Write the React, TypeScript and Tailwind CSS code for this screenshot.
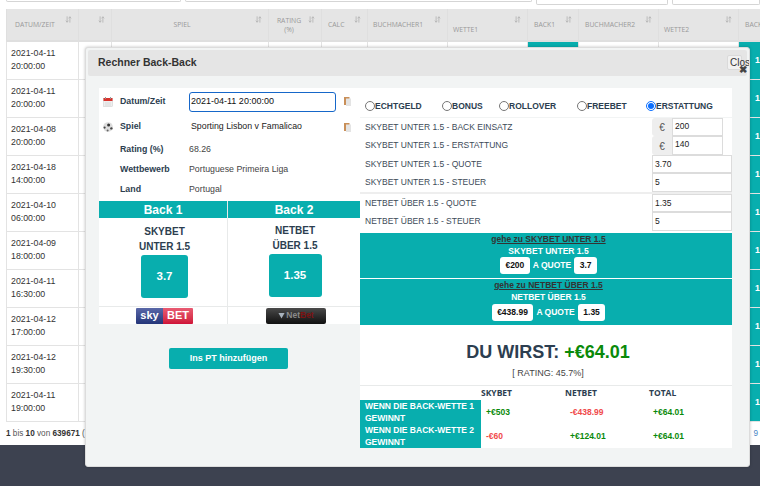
import React from 'react';

const TEAL = 'bg-[#08aeae]';

const HEADERS = [
    { label: 'DATUM/ZEIT', w: 'w-[72px]', cls: 'text-left pl-2' },
    { label: '', w: 'w-[33px]', cls: '' },
    { label: 'SPIEL', w: 'w-[157px]', cls: 'text-center pr-[16px]' },
    { label: 'RATING (%)', w: 'w-[53px]', cls: 'text-center pr-[12px]' },
    { label: 'CALC', w: 'w-[46px]', cls: 'text-left pl-[6px]' },
    { label: 'BUCHMACHER1', w: 'w-[80px]', cls: 'text-left pl-[5px]' },
    { label: 'WETTE1', w: 'w-[80px]', cls: 'text-left pl-[5px] pt-[9px]' },
    { label: 'BACK1', w: 'w-[51px]', cls: 'text-left pl-[6px]' },
    { label: 'BUCHMACHER2', w: 'w-[80px]', cls: 'text-left pl-[6px]' },
    { label: 'WETTE2', w: 'w-[80px]', cls: 'text-left pl-[5px] pt-[9px]' },
    { label: 'BACK2', w: 'w-[60px]', cls: 'text-left pl-[6px]' },
];

const DATES = [
    ['2021-04-11', '20:00:00'],
    ['2021-04-11', '20:00:00'],
    ['2021-04-08', '20:00:00'],
    ['2021-04-18', '14:00:00'],
    ['2021-04-10', '06:00:00'],
    ['2021-04-09', '18:00:00'],
    ['2021-04-11', '16:30:00'],
    ['2021-04-12', '17:00:00'],
    ['2021-04-12', '19:30:00'],
    ['2021-04-11', '19:00:00'],
];

const RADIOS = [
    { label: 'ECHTGELD', w: 'w-[77px]' },
    { label: 'BONUS', w: 'w-[57px]' },
    { label: 'ROLLOVER', w: 'w-[78px]' },
    { label: 'FREEBET', w: 'w-[69px]' },
    { label: 'ERSTATTUNG', w: 'w-[80px]', checked: true },
];

function SortIcon({ className }: { className?: string }) {
    return (
        <svg viewBox="0 0 10 9" className={`h-[7px] w-[7px] text-[#b5b5b5] ${className ?? ''}`} fill="none" stroke="currentColor" strokeWidth="1.2" preserveAspectRatio="none">
            <path d="M3 0.5V8M1.2 6L3 8L4.8 6" />
            <path d="M7 8.5V1M5.2 3L7 1L8.8 3" />
        </svg>
    );
}

function BackgroundTable() {
    return (
        <table className="ml-[6px] table-fixed border-collapse w-[792px] font-['Liberation_Sans',sans-serif]">
            <thead>
                <tr className="h-[32px] bg-[#e5e5e5]">
                    {HEADERS.map((h, i) => (
                        <th key={i} className={`${h.w} ${h.cls} relative border-x border-[#dfdfdf] border-b-2 text-[6.8px] font-normal leading-[9px] text-[#999] font-['Open_Sans',sans-serif]`}>
                            {h.label === 'RATING (%)' ? <>RATING<br />(%)</> : h.label}
                            <SortIcon className="absolute right-[6px] top-[7px]" />
                        </th>
                    ))}
                </tr>
            </thead>
            <tbody>
                {DATES.map((d, i) => (
                    <tr key={i} className="h-[38px]">
                        {HEADERS.map((h, j) => (
                            <td
                                key={j}
                                className={`border border-[#e3e3e3] text-[8.8px] leading-[13px] text-[#333] pl-[4px] ${j === 7 || j === 10 ? `${TEAL} font-bold !text-white` : ''}`}
                            >
                                {j === 0 ? <>{d[0]}<br />{d[1]}</> : j === 7 || j === 10 ? <span className="block pl-[12px]">1</span> : null}
                            </td>
                        ))}
                    </tr>
                ))}
            </tbody>
        </table>
    );
}

function CalendarIcon() {
    return (
        <svg viewBox="0 0 10 10" className="h-[10px] w-[10px] shrink-0">
            <rect x="0.5" y="1.5" width="9" height="8" fill="#eee" stroke="#c9c9c9" strokeWidth="0.5" />
            <rect x="0.5" y="1" width="9" height="3" fill="#d8322c" />
            <rect x="2" y="0" width="1" height="2" fill="#999" />
            <rect x="7" y="0" width="1" height="2" fill="#999" />
            <path d="M2 6h6M2 8h6" stroke="#cfcfcf" strokeWidth="0.6" />
        </svg>
    );
}

function BallIcon() {
    return (
        <svg viewBox="0 0 10 10" className="h-[10px] w-[10px] shrink-0">
            <circle cx="5" cy="5" r="4.8" fill="#ddd" />
            <circle cx="5.6" cy="3" r="1.5" fill="#333" />
            <circle cx="1.6" cy="5.6" r="1.1" fill="#444" />
            <circle cx="8.4" cy="6.4" r="1.2" fill="#444" />
            <circle cx="4.6" cy="8.6" r="1" fill="#666" />
        </svg>
    );
}

function CopyIcon() {
    return (
        <svg viewBox="0 0 7 9" className="h-[9px] w-[7px] shrink-0">
            <rect x="0" y="0" width="5.5" height="8" fill="#c98f58" />
            <rect x="2" y="1.5" width="5" height="7.5" fill="#e4e4e4" />
        </svg>
    );
}

function InfoRow({ icon, label, children, copy, h }: { icon?: React.ReactNode; label: string; children: React.ReactNode; copy?: boolean; h: string }) {
    return (
        <div className={`flex items-center ${h}`}>
            <div className="flex w-[21px] justify-start pl-[4px]">{icon}</div>
            <div className="w-[69px] text-[8.8px] font-bold text-[#2c3e50]">{label}</div>
            <div className="flex-1 text-[8.8px]">{children}</div>
            {copy && <div className="mr-[9px]"><CopyIcon /></div>}
        </div>
    );
}

function BackColumn({ title, bookie, market, odds, up, logo, className }: { title: string; bookie: string; market: string; odds: string; up?: boolean; logo: React.ReactNode; className: string }) {
    return (
        <div className={`flex flex-col ${className}`}>
            <div className={`${TEAL} flex h-[17px] items-center justify-center text-[12px] font-bold text-white`}>{title}</div>
            <div className={`flex h-[89px] flex-col items-center border-b border-[#e8eaea] ${up ? 'pt-[5px] pl-[2px]' : 'pt-[6px] pl-[3px]'}`}>
                <div className="text-[10px] font-bold leading-[15px] text-[#2c3e50]">{bookie}</div>
                <div className="text-[10px] font-bold leading-[15px] text-[#2c3e50]">{market}</div>
                <div className={`${TEAL} mt-[1px] flex h-[43px] items-center justify-center rounded-[3px] text-[11.5px] font-bold text-white ${up ? 'w-[53px]' : 'w-[47px]'}`}>{odds}</div>
            </div>
            <div className={`flex h-[17px] items-center justify-center ${up ? 'pl-[4px]' : 'pl-[3px]'}`}>{logo}</div>
        </div>
    );
}

function FieldRow({ label, value, euro }: { label: string; value: string; euro?: boolean }) {
    return (
        <div className="flex h-[18.5px] items-center">
            <div className="flex-1 pl-[5px] text-[8.5px] text-[#3c4a57]">{label}</div>
            {euro ? (
                <div className="mr-[9px] flex h-[18.5px] w-[71px]">
                    <div className="flex w-[20px] items-end justify-center rounded-l-[3px] bg-[#eeeeee] pb-[1px] text-[10px] text-[#555]">€</div>
                    <div className="flex-1 border border-[#dcdcdc] pl-[2px] text-[8.5px] leading-[14px] text-[#222]">{value}</div>
                </div>
            ) : (
                <div className="h-[18.5px] w-[80px] border border-[#dcdcdc] pl-[2px] text-[8.5px] leading-[16px] text-[#222]">{value}</div>
            )}
        </div>
    );
}

function Pill({ children }: { children: React.ReactNode }) {
    return <span className="flex h-[17px] items-center rounded-[3px] bg-white px-[5.5px] text-[8.5px] font-bold text-[#111]">{children}</span>;
}

function BetBlock({ market, stake, odds }: { market: string; stake: string; odds: string }) {
    return (
        <div className={`${TEAL} flex h-[45.5px] flex-col items-center pl-[5px]`}>
            <div className="text-[8.5px] font-bold leading-[12px] text-[#333] underline">gehe zu {market}</div>
            <div className="text-[8.5px] font-bold leading-[12px] text-white">{market}</div>
            <div className="mt-[0.5px] flex items-center gap-[3px] text-[8.5px] font-bold text-white">
                <Pill>{stake}</Pill>
                <span>A QUOTE</span>
                <Pill>{odds}</Pill>
            </div>
        </div>
    );
}

function Modal() {
    return (
        <div className="absolute left-[85px] top-[47px] flex h-[420px] w-[665px] flex-col overflow-hidden rounded-[3px] border border-[#dcdcdc] bg-[#f2f4f4] pt-[2px] shadow-[0_0_3px_rgba(0,0,0,0.25)] font-['Liberation_Sans',sans-serif]">
            <div className="relative mx-[2px] flex h-[26px] shrink-0 items-center rounded-[2px] bg-[#e5e5e5] pl-[10px] text-[10.5px] font-bold text-[#333]">
                Rechner Back-Back
                <div className="absolute left-[639px] top-[5px] h-[15px] w-[15px] rounded-[2px] border border-[#dadada] bg-[#f1f1f1] pl-[2px] text-[10px] font-normal leading-[14px] whitespace-nowrap text-[#333]">Close</div>
                <span className="absolute left-[651px] top-[15px] text-[10px] leading-[10px] font-bold text-[#444]">✖</span>
            </div>
            <div className="ml-[13px] mt-[12px] flex">
                <div className="w-[261px]">
                    <div className="h-[113px] bg-white pt-[1px]">
                        <InfoRow h="h-[25px]" label="Datum/Zeit" icon={<CalendarIcon />} copy>
                            <div className="h-[20px] w-[147px] rounded-[3px] border-[1.5px] border-[#1667c9] pl-[1px] text-[9px] leading-[17px] text-[#111]">2021-04-11 20:00:00</div>
                        </InfoRow>
                        <InfoRow h="h-[26px]" label="Spiel" icon={<BallIcon />} copy>
                            <span className="pl-[2px] text-[#222]">Sporting Lisbon v Famalicao</span>
                        </InfoRow>
                        <InfoRow h="h-[20px]" label="Rating (%)"><span className="text-[#444]">68.26</span></InfoRow>
                        <InfoRow h="h-[20px]" label="Wettbewerb"><span className="text-[#444]">Portuguese Primeira Liga</span></InfoRow>
                        <InfoRow h="h-[19px]" label="Land"><span className="text-[#444]">Portugal</span></InfoRow>
                    </div>
                    <div className="flex bg-white">
                        <BackColumn
                            className="w-[129px] border-r border-[#e8eaea]"
                            title="Back 1"
                            bookie="SKYBET"
                            market="UNTER 1.5"
                            odds="3.7"
                            logo={
                                <div className="flex h-[16px] w-[57px] overflow-hidden rounded-[1px] text-[11px] font-bold leading-[15px] text-white">
                                    <span className="w-[27px] bg-linear-to-b from-[#5a68a8] to-[#243579] text-center">sky</span>
                                    <span className="flex-1 bg-linear-to-b from-[#e85a72] to-[#cf0f38] text-center">BET</span>
                                </div>
                            }
                        />
                        <BackColumn
                            className="w-[132px]"
                            up
                            title="Back 2"
                            bookie="NETBET"
                            market="ÜBER 1.5"
                            odds="1.35"
                            logo={
                                <div className="flex h-[16px] w-[60px] items-center justify-center gap-[1px] rounded-[2px] bg-linear-to-b from-[#4a4a4a] to-[#111] text-[8.5px] font-bold text-[#8a8a8a]">
                                    <svg viewBox="0 0 8 8" className="h-[7px] w-[7px]"><path d="M0.5 1H7.5L4 7.5Z" fill="#a8b2bc" /></svg>
                                    <span>Net<span className="text-[#7d1212]">Bet</span></span>
                                </div>
                            }
                        />
                    </div>
                    <div className="mt-[24px] flex justify-center pr-[2px]">
                        <div className={`${TEAL} flex h-[21px] w-[119px] items-center justify-center rounded-[2px] text-[9px] font-bold text-white`}>Ins PT hinzufügen</div>
                    </div>
                </div>
                <div className="flex h-[360px] w-[372px] flex-col bg-white">
                    <div className="flex h-[30px] items-center border-b border-[#f2f4f4] pt-[8px] pl-[5px]">
                        {RADIOS.map(r => (
                            <label key={r.label} className={`flex items-center text-[8.5px] font-bold text-[#2c3e50] ${r.w}`}>
                                <input type="radio" name="betType" readOnly checked={!!r.checked} className="m-0 h-[10px] w-[10px] accent-[#0b6fff]" />
                                {r.label}
                            </label>
                        ))}
                    </div>
                    <FieldRow euro label="SKYBET UNTER 1.5 - BACK EINSATZ" value="200" />
                    <FieldRow euro label="SKYBET UNTER 1.5 - ERSTATTUNG" value="140" />
                    <FieldRow label="SKYBET UNTER 1.5 - QUOTE" value="3.70" />
                    <FieldRow label="SKYBET UNTER 1.5 - STEUER" value="5" />
                    <div className="h-[2px] bg-[#eeeeee]" />
                    <FieldRow label="NETBET ÜBER 1.5  - QUOTE" value="1.35" />
                    <FieldRow label="NETBET ÜBER 1.5 - STEUER" value="5" />
                    <div className="mt-[2px] flex flex-col gap-[1px]">
                        <BetBlock market="SKYBET UNTER 1.5" stake="€200" odds="3.7" />
                        <BetBlock market="NETBET ÜBER 1.5" stake="€438.99" odds="1.35" />
                    </div>
                    <div className="flex h-[62px] flex-col items-center border-b border-[#e8eaea] pt-[16px] pl-[4px]">
                        <div className="text-[18px] font-bold leading-[23px] text-[#2c3e50]">DU WIRST: <span className="text-[#0a8a0a]">+€64.01</span></div>
                        <div className="mt-[3px] text-[9px] text-[#444]">[ RATING: 45.7%]</div>
                    </div>
                    <div className="grid grid-cols-[121px_84px_84px_1fr] text-[8.5px] font-bold">
                        <div />
                        <div className="h-[14px] font-['Open_Sans',sans-serif] leading-[14px] text-[#2c3e50]">SKYBET</div>
                        <div className="font-['Open_Sans',sans-serif] leading-[14px] text-[#2c3e50]">NETBET</div>
                        <div className="font-['Open_Sans',sans-serif] leading-[14px] text-[#2c3e50]">TOTAL</div>
                        <div className={`${TEAL} row-span-2 flex flex-col pl-[5px] text-[8.5px] leading-[12px] text-white`}>
                            <span>WENN DIE BACK-WETTE 1 GEWINNT</span>
                            <span>WENN DIE BACK-WETTE 2 GEWINNT</span>
                        </div>
                        <div className="flex h-[24px] items-center pl-[5px] text-[#0a8a0a]">+€503</div>
                        <div className="flex items-center pl-[5px] text-[#f04a4a]">-€438.99</div>
                        <div className="flex items-center pl-[4px] text-[#0a8a0a]">+€64.01</div>
                        <div className="flex h-[24px] items-center pl-[5px] text-[#f04a4a]">-€60</div>
                        <div className="flex items-center pl-[5px] text-[#0a8a0a]">+€124.01</div>
                        <div className="flex items-center pl-[4px] text-[#0a8a0a]">+€64.01</div>
                    </div>
                </div>
            </div>
        </div>
    );
}

export default function App() {
    return (
        <div className="relative flex h-[486px] w-[760px] flex-col overflow-hidden bg-white font-['Liberation_Sans',sans-serif]">
            <div className="flex h-[9px] shrink-0 gap-[4px] pl-[6px]">
                <div className="h-[2px] w-[178px] rounded-b-[2px] border-x border-b border-[#d5d5d5]" />
                <div className="h-[2px] w-[353px] rounded-b-[2px] border-x border-b border-[#d5d5d5]" />
                <div className="h-[5px] w-[134px] rounded-b-[2px] border-x border-b border-[#d5d5d5]" />
                <div className="h-[5px] w-[90px] rounded-b-[2px] border-x border-b border-[#d5d5d5]" />
            </div>
            <BackgroundTable />
            <div className="flex h-[23px] shrink-0 items-center justify-between pl-[6px] pt-[3px] text-[8.2px] text-[#555]">
                <div><b className="text-[#333]">1</b> bis <b className="text-[#333]">10</b> von <b className="text-[#333]">639671</b> (</div>
                <div className="pr-[2px] text-[#4a86c5]">9</div>
            </div>
            <div className="flex-1 bg-[#3d4250]" />
            <Modal />
        </div>
    );
}
